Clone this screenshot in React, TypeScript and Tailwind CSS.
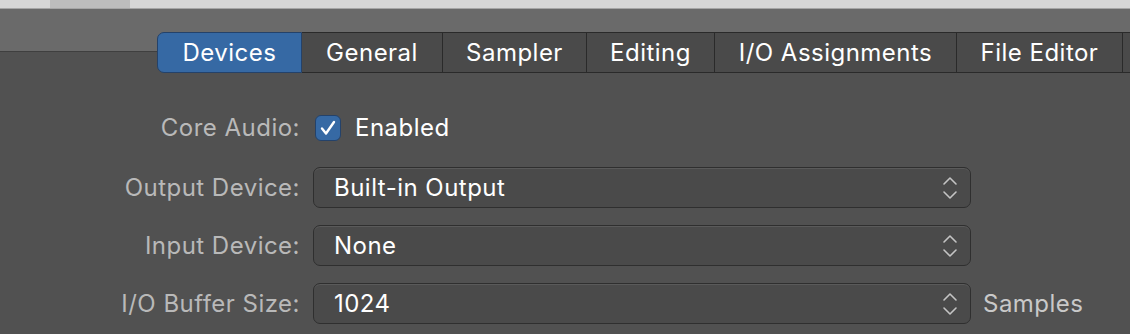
const tabs = [
  { label: "Devices", w: 145 },
  { label: "General", w: 141 },
  { label: "Sampler", w: 144 },
  { label: "Editing", w: 128 },
  { label: "I/O Assignments", w: 242 },
  { label: "File Editor", w: 166 },
  { label: "", w: 40 },
]

const Chevrons = () => (
  <svg width="16" height="26" viewBox="0 0 16 26" fill="none" stroke="#c4c4c4" strokeWidth="1.6" strokeLinecap="round" strokeLinejoin="round">
    <path d="M2 9 L8 3 L14 9" />
    <path d="M2 17 L8 23 L14 17" />
  </svg>
)

const Select = ({ value }: { value: string }) => (
  <div className="w-[658px] h-[41px] rounded-[7px] bg-[#4a4a4a] border border-[#2f2f2f] shadow-[inset_0_1px_0_#5a5a5a] flex items-center pl-[20px] pr-[12px]">
    <span className="flex-1 text-white">{value}</span>
    <Chevrons />
  </div>
)

const Row = ({ label, children, className }: { label: string; children: React.ReactNode; className?: string }) => (
  <div className={"flex items-center " + (className ?? "")}>
    <div className="w-[300px] text-right text-[#b9b9b9]">{label}</div>
    {children}
  </div>
)

export default function App() {
  return (
    <div className="w-[1130px] h-[334px] overflow-hidden bg-[#515151] text-[24px] tracking-[0.02em] leading-none font-['Inter','Liberation_Sans',sans-serif]">
      <div className="h-[9px] bg-[#d6d6d6] border-b border-[#a5a5a5]">
        <div className="ml-[50px] w-[80px] h-full bg-[#bdbdbd]" />
      </div>
      <div className="h-[43px] bg-[#6a6a6a] border-b border-[#3f3f3f]" />
      <div className="relative -mt-[20px] flex pl-[157px]">
        {tabs.map((t, i) => (
          <div
            key={i}
            style={{ width: t.w }}
            className={
              i === 0
                ? "h-[41px] shrink-0 flex items-center justify-center rounded-l-[7px] border border-[#24426a] bg-[#3669a4] text-white"
                : "h-[41px] shrink-0 flex items-center justify-center border-y border-r border-[#2a2a2a] bg-[#4a4a4a] text-white"
            }
          >
            {t.label}
          </div>
        ))}
      </div>

      <Row label="Core Audio:" className="mt-[42px] h-[26px]">
        <div className="ml-[15px] w-[26px] h-[26px] rounded-[6px] bg-[#3669a4] border border-[#24426a] flex items-center justify-center">
          <svg width="20" height="20" viewBox="0 0 20 20" fill="none" stroke="white" strokeWidth="2.4" strokeLinecap="round" strokeLinejoin="round">
            <path d="M4 10.5 L8 15.5 L16 4" />
          </svg>
        </div>
        <span className="ml-[14px] text-white">Enabled</span>
      </Row>

      <Row label="Output Device:" className="mt-[26px]">
        <div className="ml-[13px]"><Select value="Built-in Output" /></div>
      </Row>
      <Row label="Input Device:" className="mt-[17px]">
        <div className="ml-[13px]"><Select value="None" /></div>
      </Row>
      <Row label="I/O Buffer Size:" className="mt-[17px]">
        <div className="ml-[13px]"><Select value="1024" /></div>
        <span className="ml-[12px] text-[#c9c9c9]">Samples</span>
      </Row>
    </div>
  )
}
